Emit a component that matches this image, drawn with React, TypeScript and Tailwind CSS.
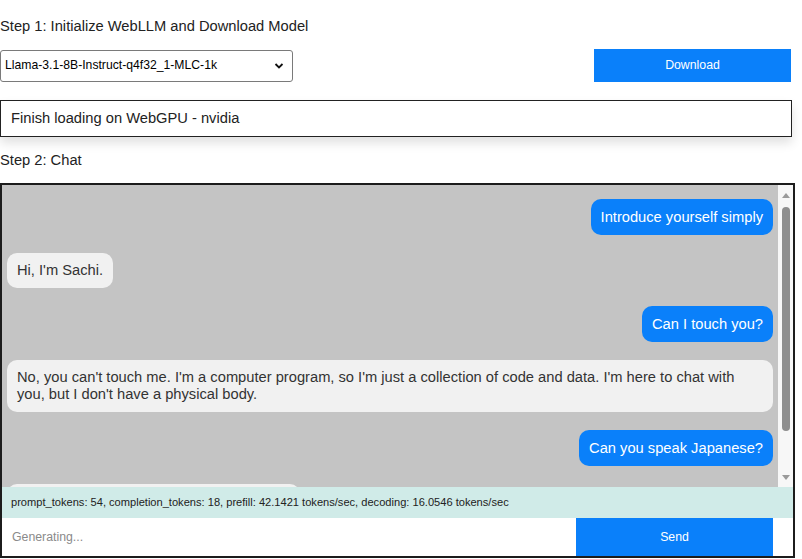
import * as React from 'react'

type Msg = { role: 'user' | 'assistant'; text: string }

const MESSAGES: Msg[] = [
  { role: 'user', text: 'Introduce yourself simply' },
  { role: 'assistant', text: "Hi, I'm Sachi." },
  { role: 'user', text: 'Can I touch you?' },
  {
    role: 'assistant',
    text: "No, you can't touch me. I'm a computer program, so I'm just a collection of code and data. I'm here to chat with you, but I don't have a physical body.",
  },
  { role: 'user', text: 'Can you speak Japanese?' },
]

function Bubble({ msg }: { msg: Msg }) {
  const isUser = msg.role === 'user'
  return (
    <div className={isUser ? 'flex justify-end' : 'flex justify-start'}>
      <div
        className={
          isUser
            ? 'rounded-[10px] bg-[#0a80fa] px-[10px] py-[9px] text-[14.7px] leading-[18px] text-white'
            : 'rounded-[10px] bg-[#f1f1f1] px-[10px] py-[8.6px] text-[14.7px] leading-[17px] text-[#333]'
        }
      >
        {msg.text}
      </div>
    </div>
  )
}

function Scrollbar() {
  return (
    <div className="flex w-[15px] flex-shrink-0 flex-col items-center bg-[#f7f7f7]">
      <svg width="10" height="12" viewBox="0 0 10 12" className="mt-[4px]">
        <path d="M1 9 L5 4 L9 9 Z" fill="#9a9a9a" />
      </svg>
      <div className="mt-[6px] h-[224px] w-[8px] rounded-full bg-[#8e8e8e]" />
      <div className="flex-1" />
      <svg width="10" height="12" viewBox="0 0 10 12" className="mb-[3px]">
        <path d="M1 3 L5 8 L9 3 Z" fill="#9a9a9a" />
      </svg>
    </div>
  )
}

export default function App() {
  return (
    <div
      className="h-[559px] w-[802px] overflow-hidden bg-white text-[#222]"
      style={{ fontFamily: '"Liberation Sans", Arial, sans-serif' }}
    >
      <div className="pt-[17px] text-[14.7px] leading-[18px]">
        Step 1: Initialize WebLLM and Download Model
      </div>

      <div className="mt-[14px] flex items-center justify-between pr-[11px]">
        <div className="flex h-[32px] w-[293px] items-center justify-between rounded-[3px] border border-[#7a7a7a] bg-white pl-[4px] pr-[8px] text-[12.2px] text-black">
          <span>Llama-3.1-8B-Instruct-q4f32_1-MLC-1k</span>
          <svg width="10" height="8" viewBox="0 0 10 8">
            <path d="M1.5 2 L5 5.5 L8.5 2" fill="none" stroke="#111" strokeWidth="1.8" />
          </svg>
        </div>
        <button className="h-[33px] w-[197px] bg-[#0a80fa] text-[12.3px] text-white">
          Download
        </button>
      </div>

      <div className="mt-[18px] flex h-[37px] w-[792px] items-center border border-[#222] px-[10px] text-[14.7px] shadow-[0_6px_10px_rgba(0,0,0,0.12)]">
        Finish loading on WebGPU - nvidia
      </div>

      <div className="mt-[14px] text-[14.7px] leading-[18px]">Step 2: Chat</div>

      <div className="mt-[14px] flex h-[375px] w-[795px] flex-col border-2 border-[#1c1c1c]">
        <div className="flex h-[302px] flex-shrink-0">
          <div className="flex flex-1 flex-col gap-[18.4px] overflow-hidden bg-[#c4c4c4] px-[5px] pt-[14px]">
            {MESSAGES.map((m, i) => (
              <Bubble key={i} msg={m} />
            ))}
            {/* reply being streamed, only its top edge shows */}
            <div className="flex justify-start">
              <div className="h-[35px] w-[293px] flex-shrink-0 rounded-[10px] bg-[#f1f1f1]" />
            </div>
          </div>
          <Scrollbar />
        </div>
        <div className="flex h-[31px] flex-shrink-0 items-center bg-[#d0ebe8] px-[9px] text-[11.1px] text-[#222]">
          prompt_tokens: 54, completion_tokens: 18, prefill: 42.1421 tokens/sec, decoding: 16.0546 tokens/sec
        </div>
        <div className="flex flex-1 items-stretch bg-white">
          <input
            className="min-w-0 flex-1 bg-white px-[10px] text-[12.3px] text-[#333] placeholder:text-[#8a8a8a] focus:outline-none"
            placeholder="Generating..."
          />
          <button className="w-[197px] bg-[#0a80fa] text-[12.3px] text-white">Send</button>
          <div className="w-[20px]" />
        </div>
      </div>
    </div>
  )
}
